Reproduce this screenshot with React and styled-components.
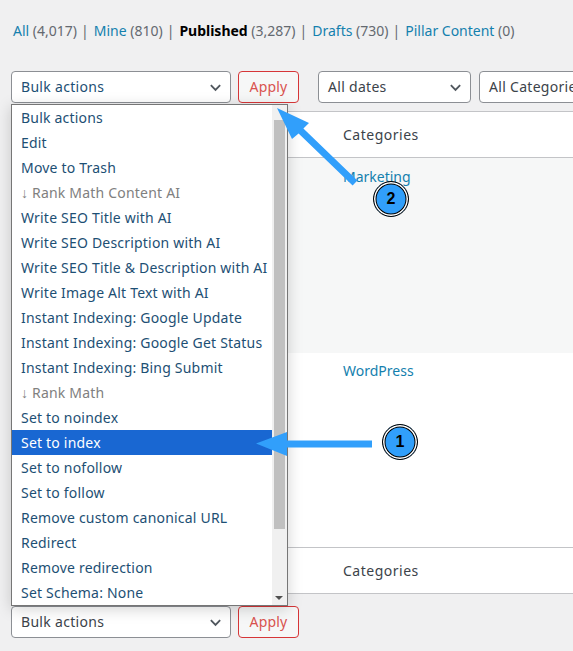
import React from 'react';
import styled, { createGlobalStyle } from 'styled-components';

const Global = createGlobalStyle`
  html, body { margin: 0; padding: 0; background: #f0f0f1; }
  body { font-family: "Noto Sans", "Open Sans", sans-serif; font-size: 14px; color: #3c434a; }
`;

const Page = styled.div`
  position: relative;
  width: 573px;
  height: 651px;
  overflow: hidden;
  box-sizing: border-box;
  padding: 21px 0 0 11px;
`;

const SubNav = styled.ul`
  list-style: none;
  display: flex;
  margin: 0 0 0 2px;
  padding: 0;
  height: 20px;
  line-height: 20px;
  white-space: nowrap;
  color: #646970;
  font-size: 14px;
`;

const NavItem = styled.li`
  & + &::before {
    content: '|';
    margin: 0 5px 0 4px;
    color: #646970;
  }
`;

const NavLink = styled.span`
  color: ${p => (p.$current ? '#000' : '#1480ae')};
  font-weight: ${p => (p.$current ? 700 : 400)};
`;

const Toolbar = styled.div`
  display: flex;
  align-items: center;
  height: 32px;
  margin-top: ${p => p.$mt}px;
  white-space: nowrap;
`;

const Select = styled.div`
  flex: none;
  box-sizing: border-box;
  width: ${p => p.$w}px;
  height: 32px;
  margin-left: ${p => p.$ml || 0}px;
  padding: 0 8px 0 9px;
  display: flex;
  align-items: center;
  justify-content: space-between;
  background: #fff;
  border: 1px solid #8c8f94;
  border-radius: 4px;
  color: ${p => (p.$open ? '#1d4f74' : '#3c434a')};
  letter-spacing: 0.3px;
`;

const Label = styled.span`
  margin-bottom: 2px;
`;

const Apply = styled.div`
  flex: none;
  box-sizing: border-box;
  width: 61px;
  height: 32px;
  margin-left: 7px;
  padding-bottom: 2px;
  display: flex;
  align-items: center;
  justify-content: center;
  background: #f6f7f7;
  border: 1px solid #d63638;
  border-radius: 4px;
  color: #d9534f;
  letter-spacing: 0.2px;
`;

const Table = styled.div`
  margin-top: 8px;
  background: #fff;
  border: 1px solid #c3c4c7;
  border-right: 0;
  width: 600px;
`;

const HeadRow = styled.div`
  height: ${p => p.$h}px;
  box-sizing: border-box;
  padding-left: 331px;
  display: flex;
  align-items: center;
  color: #3c434a;
  letter-spacing: 0.5px;
  border-top: ${p => (p.$foot ? '1px solid #c3c4c7' : '0')};
  border-bottom: ${p => (p.$foot ? '0' : '1px solid #c3c4c7')};
`;

const Row = styled.div`
  height: ${p => p.$h}px;
  box-sizing: border-box;
  padding: ${p => p.$pt}px 0 0 331px;
  line-height: 20px;
  background: ${p => (p.$alt ? '#f6f7f7' : '#fff')};
  color: #1480ae;
`;

const Dropdown = styled.div`
  position: absolute;
  left: 11px;
  top: 104px;
  width: 277px;
  height: 502px;
  box-sizing: border-box;
  background: #fff;
  border: 1px solid #767676;
  box-shadow: 0 3px 14px rgba(0, 0, 0, 0.18);
  display: flex;
`;

const OptionList = styled.div`
  flex: 1;
  min-width: 0;
`;

const Option = styled.div`
  height: 25px;
  line-height: 25px;
  padding-left: 9px;
  white-space: nowrap;
  letter-spacing: 0.2px;
  background: ${p => (p.$selected ? '#1967d2' : 'transparent')};
  color: ${p => (p.$selected ? '#fff' : p.$group ? '#808080' : '#1d4f74')};
`;

const Scrollbar = styled.div`
  position: relative;
  flex: none;
  width: 15px;
  background: #f0f0f0;
`;

const Thumb = styled.div`
  position: absolute;
  left: 2px;
  right: 2px;
  top: 15px;
  height: 409px;
  background: #c0c0c0;
`;

const ScrollArrow = styled.div`
  position: absolute;
  left: 3px;
  bottom: 5px;
  width: 0;
  height: 0;
  border-left: 4px solid transparent;
  border-right: 4px solid transparent;
  border-top: 4px solid #505050;
`;

const Overlay = styled.svg`
  position: absolute;
  left: 0;
  top: 0;
  pointer-events: none;
`;

const Badge = styled.div`
  position: absolute;
  left: ${p => p.$x - 18}px;
  top: ${p => p.$y - 18}px;
  width: 36px;
  height: 36px;
  box-sizing: border-box;
  border-radius: 50%;
  background: #319ffb;
  border: 1px solid #000;
  box-shadow: inset 0 0 0 1.5px #fff, inset 0 0 0 2.5px #000;
  display: flex;
  align-items: center;
  justify-content: center;
  color: #000;
  font-family: "Liberation Sans", sans-serif;
  font-weight: 700;
  font-size: 16px;
`;

const Chevron = () => (
  <svg width="13" height="13" viewBox="0 0 14 14" fill="none" stroke="#50575e" strokeWidth="2">
    <path d="M2 4.5 L7 9.5 L12 4.5" />
  </svg>
);

const options = [
  ['Bulk actions'],
  ['Edit'],
  ['Move to Trash'],
  ['↓ Rank Math Content AI', 'group'],
  ['Write SEO Title with AI'],
  ['Write SEO Description with AI'],
  ['Write SEO Title & Description with AI'],
  ['Write Image Alt Text with AI'],
  ['Instant Indexing: Google Update'],
  ['Instant Indexing: Google Get Status'],
  ['Instant Indexing: Bing Submit'],
  ['↓ Rank Math', 'group'],
  ['Set to noindex'],
  ['Set to index', 'selected'],
  ['Set to nofollow'],
  ['Set to follow'],
  ['Remove custom canonical URL'],
  ['Redirect'],
  ['Remove redirection'],
  ['Set Schema: None'],
];

const views = [
  ['All', '(4,017)'],
  ['Mine', '(810)'],
  ['Published', '(3,287)', true],
  ['Drafts', '(730)'],
  ['Pillar Content', '(0)'],
];

export default function App() {
  return (
    <Page>
      <Global />
      <SubNav>
        {views.map(([label, count, current]) => (
          <NavItem key={label}>
            <NavLink $current={current}>{label}</NavLink> {count}
          </NavItem>
        ))}
      </SubNav>

      <Toolbar $mt={30}>
        <Select $w={220} $open><Label>Bulk actions</Label> <Chevron /></Select>
        <Apply>Apply</Apply>
        <Select $w={153} $ml={19}><Label>All dates</Label> <Chevron /></Select>
        <Select $w={160} $ml={8}><Label>All Categories</Label> <Chevron /></Select>
      </Toolbar>

      <Table>
        <HeadRow $h={46}>Categories</HeadRow>
        <Row $h={195} $alt $pt={9}>Marketing</Row>
        <Row $h={194} $pt={8}>WordPress</Row>
        <HeadRow $h={46} $foot>Categories</HeadRow>
      </Table>

      <Toolbar $mt={12}>
        <Select $w={220}><Label>Bulk actions</Label> <Chevron /></Select>
        <Apply>Apply</Apply>
      </Toolbar>

      <Dropdown>
        <OptionList>
          {options.map(([label, kind]) => (
            <Option key={label} $group={kind === 'group'} $selected={kind === 'selected'}>{label}</Option>
          ))}
        </OptionList>
        <Scrollbar>
          <Thumb />
          <ScrollArrow />
        </Scrollbar>
      </Dropdown>

      <Overlay width="573" height="651" viewBox="0 0 573 651">
        <path fill="#319ffb" d="M256 443.5 L287 432 L287 440.5 L372 440.5 L372 447.5 L287 447.5 L287 456 Z" />
        <path fill="#319ffb" d="M277 108 L309 123 L303.4 128.5 L357.4 180.5 L352.6 185.5 L298.6 133.5 L292 139 Z" />
      </Overlay>
      <Badge $x={400} $y={442}>1</Badge>
      <Badge $x={391} $y={199}>2</Badge>
    </Page>
  );
}
